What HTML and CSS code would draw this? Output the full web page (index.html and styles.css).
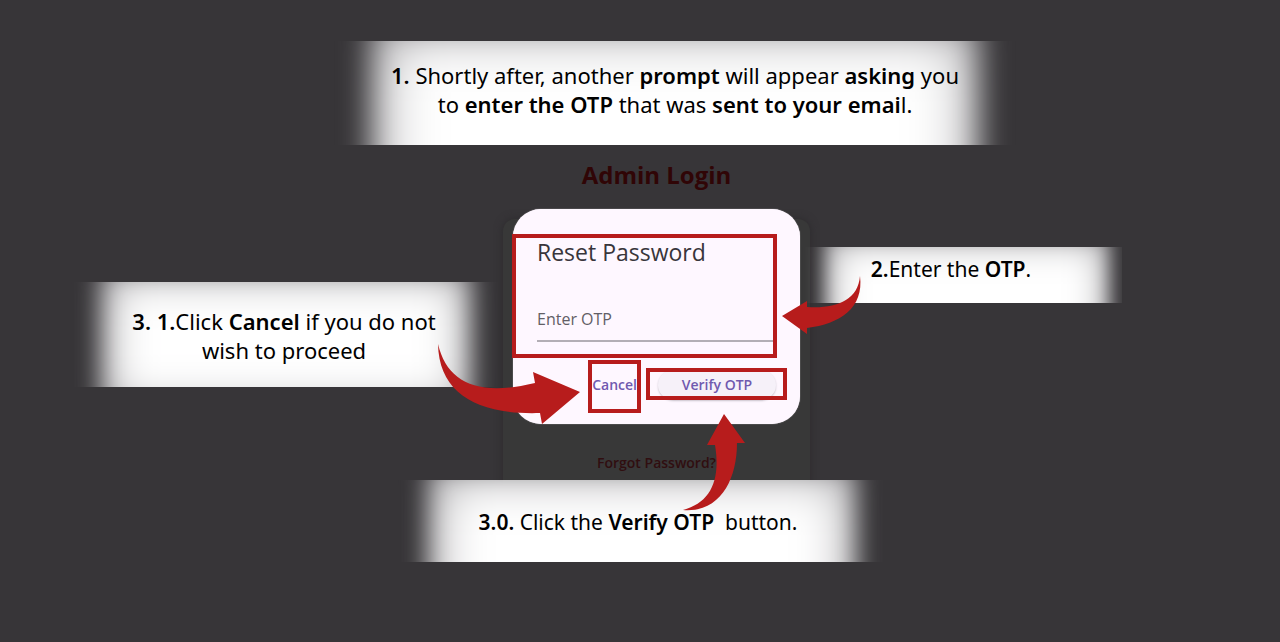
FILE: index.html
```html
<!DOCTYPE html>
<html lang="en">
<head>
<meta charset="utf-8">
<meta name="viewport" content="width=device-width, initial-scale=1">
<title>Reset Password</title>
<link rel="stylesheet" href="styles.css">
</head>
<body>
<main class="scene">
  <section class="login">
    <h1 class="login-title">Admin Login</h1>
    <div class="login-card">
      <a class="forgot" href="#">Forgot Password?</a>
      <form class="dialog" role="dialog" aria-labelledby="dialog-title">
        <h2 class="dialog-title" id="dialog-title">Reset Password</h2>
        <input class="otp" type="text" placeholder="Enter OTP" aria-label="Enter OTP">
        <div class="actions">
          <button class="btn cancel" type="button">Cancel</button>
          <button class="btn verify" type="button">Verify OTP</button>
        </div>
      </form>
    </div>
  </section>

  <p class="note note-prompt"><span><b>1.</b> Shortly after, another <b>prompt</b> will appear <b>asking</b> you<br>to <b>enter the OTP</b> that was <b>sent to your emai</b>l.</span></p>
  <p class="note note-enter"><span><b>2.</b>Enter the <b>OTP</b>.</span></p>
  <p class="note note-cancel"><span><b>3. 1.</b>Click <b>Cancel</b> if you do not<br>wish to proceed</span></p>
  <p class="note note-verify"><span><b>3.0.</b> Click the <b>Verify OTP</b>&nbsp; button.</span></p>

  <div class="frame frame-field"></div>
  <div class="frame frame-cancel"></div>
  <div class="frame frame-verify"></div>

  <svg class="arrow arrow-enter" width="80" height="58" viewBox="0 0 80 58" aria-hidden="true"><path d="M78 1C82 33 58 49 25 53V59L0 41L25 26V32C53 34 76 26 78 1Z"/></svg>
  <svg class="arrow arrow-cancel" width="142" height="82" viewBox="0 0 142 82" aria-hidden="true"><path d="M0 0C9 38 39 53 97 39L95 28L142 48L104 80L102 69C40 71 1 50 0 0Z"/></svg>
  <svg class="arrow arrow-verify" width="64" height="98" viewBox="0 0 64 98" aria-hidden="true"><path d="M0 96C27 89 38 67 32 31H24L41 0L62 29L54 29C54 66 37 99 0 96Z"/></svg>
</main>
</body>
</html>
```
FILE: styles.css
```css
* { box-sizing: border-box; }

body {
  margin: 0;
  background: #373538;
  font-family: "Noto Sans", "Open Sans", sans-serif;
}

.scene {
  position: relative;
  min-height: 100vh;
  overflow: hidden;
}

.login {
  display: flex;
  flex-direction: column;
  align-items: center;
  padding: 159px 0 0 33px;
}

.login-title {
  margin: 0 0 28px;
  font: 700 24px/32px "Open Sans", sans-serif;
  color: #300506;
}

.login-card {
  position: relative;
  display: flex;
  flex-direction: column;
  justify-content: flex-end;
  align-items: center;
  width: 307px;
  min-height: 308px;
  padding-bottom: 54px;
  border-radius: 12px;
  background: #383838;
  box-shadow: 0 0 8px #2c2a2d;
}

.forgot {
  font: 600 14px/20px "Open Sans", sans-serif;
  color: #300e10;
  text-decoration: none;
}

.dialog {
  position: absolute;
  top: -10px;
  left: 10px;
  right: 10px;
  display: flex;
  flex-direction: column;
  padding: 27px 24px 24px;
  border-radius: 28px;
  background: #fef7ff;
  box-shadow: 0 0 1px #fef7ff;
}

.dialog-title {
  margin: 0 0 34px;
  font: 400 23px/32px "Open Sans", sans-serif;
  color: #38353b;
}

.otp {
  width: 100%;
  height: 40px;
  padding: 0 0 4px;
  border: 0;
  border-bottom: 2px solid #b3aeb5;
  background: transparent;
  font: 400 16px/24px "Open Sans", sans-serif;
  color: #38353b;
}

.otp::placeholder { color: #625e66; opacity: 1; }

.actions {
  display: flex;
  justify-content: flex-end;
  gap: 21px;
  margin-top: 28px;
}

.btn {
  height: 30px;
  padding: 0;
  border: 0;
  border-radius: 16px;
  background: none;
  font: 600 14px/20px "Open Sans", sans-serif;
  color: #7059af;
}

.verify {
  width: 118px;
  background: #f6f1f9;
  box-shadow: 0 1px 2px #c9c3cc;
}

/* Callouts: a soft white glow cut off by the edges of the strip. */
.note {
  position: absolute;
  margin: 0;
  overflow: hidden;
  text-align: center;
  font-size: 22px;
  line-height: 29px;
  color: #000;
}

.note b { font-weight: 600; }

.note::before {
  content: "";
  position: absolute;
  inset: -20px 52px -90px;
  background: #fff;
  box-shadow: inset 0 0 60px #77757a;
  filter: blur(15px);
}

.note span { position: relative; }

.note-prompt {
  top: 41px;
  left: calc(50% - 322px);
  width: 714px;
  padding: 20px 0 26px;
}

.note-enter {
  top: 247px;
  left: calc(50% + 160px);
  width: 322px;
  padding: 8px 0 19px;
  font-size: 21px;
}

.note-enter::before {
  inset: -12px 12px -50px 24px;
  box-shadow: inset 0 0 36px #77757a;
  filter: blur(9px);
}

.note-enter span { left: -10px; }

.note-cancel {
  top: 282px;
  left: calc(50% - 570px);
  width: 428px;
  padding: 25px 0 22px;
}

.note-cancel::before {
  inset: -14px 26px -28px 30px;
  box-shadow: inset 0 0 44px #77757a;
  filter: blur(12px);
}

.note-verify {
  top: 480px;
  left: calc(50% - 247px);
  width: 490px;
  padding: 28px 0 25px;
  font-size: 21px;
}

.note-verify::before {
  inset: -14px 26px -90px 34px;
  box-shadow: inset 0 0 52px #77757a;
  filter: blur(12px);
}

.frame {
  position: absolute;
  border: 4px solid #b71c1c;
}

.frame-field { top: 234px; left: calc(50% - 128px); width: 265px; height: 124px; }
.frame-cancel { top: 360px; left: calc(50% - 52px); width: 53px; height: 53px; }
.frame-verify { top: 368px; left: calc(50% + 6px); width: 141px; height: 32px; }

.arrow {
  position: absolute;
  overflow: visible;
  fill: #b71c1c;
}

.arrow-enter { top: 275px; left: calc(50% + 142px); }
.arrow-cancel { top: 344px; left: calc(50% - 202px); }
.arrow-verify { top: 414px; left: calc(50% + 43px); }
```
